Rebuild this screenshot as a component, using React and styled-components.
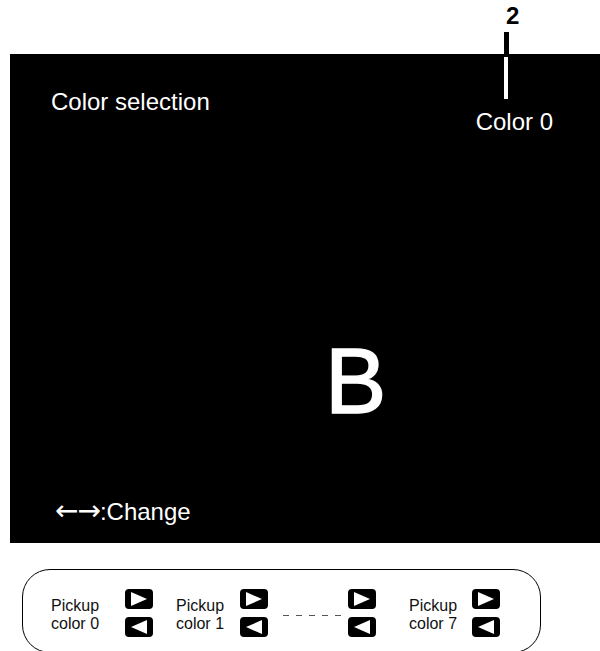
import styled, { createGlobalStyle } from "styled-components";

const GlobalStyle = createGlobalStyle`
  html, body {
    margin: 0;
    padding: 0;
    background: #fff;
    overflow: hidden;
  }
  body {
    font-family: "Liberation Sans", Arial, sans-serif;
  }
`;

export default function App() {
  return (
    <Page>
      <GlobalStyle />
      <Header>
        <Callout>
          <Marker>2</Marker>
          <Stem />
        </Callout>
      </Header>
      <Screen>
        <TopRow>
          <Title>Color selection</Title>
          <ColorInfo>
            <Tick />
            <ColorName>Color 0</ColorName>
          </ColorInfo>
        </TopRow>
        <Letter>B</Letter>
        <Hint>
          <Arrows>←→</Arrows>:Change
        </Hint>
      </Screen>
      <ButtonStrip>
        <Label $gap={26}>
          Pickup
          <br />
          color 0
        </Label>
        <ArrowPair $gap={23} />
        <Label $gap={16}>
          Pickup
          <br />
          color 1
        </Label>
        <ArrowPair $gap={15} />
        <Dashes />
        <ArrowPair $gap={33} />
        <Label $gap={15}>
          Pickup
          <br />
          color 7
        </Label>
        <ArrowPair />
      </ButtonStrip>
    </Page>
  );
}

function ArrowPair({ $gap }) {
  return (
    <Keys $gap={$gap}>
      <Key>
        <svg width="28" height="20" viewBox="0 0 28 20">
          <polygon points="6,3 22,10 6,17" fill="#fff" />
        </svg>
      </Key>
      <Key>
        <svg width="28" height="20" viewBox="0 0 28 20">
          <polygon points="6,10 22,3 22,17" fill="#fff" />
        </svg>
      </Key>
    </Keys>
  );
}

const Page = styled.div`
  width: 600px;
  height: 651px;
  overflow: hidden;
`;

const Header = styled.div`
  height: 54px;
  display: flex;
  padding-left: 504px;
  box-sizing: border-box;
`;

const Callout = styled.div`
  display: flex;
  flex-direction: column;
  align-items: flex-start;
`;

const Marker = styled.div`
  font-size: 24px;
  line-height: 24px;
  font-weight: bold;
  color: #000;
  padding-top: 4px;
  margin-left: 2px;
`;

const Stem = styled.div`
  width: 5px;
  height: 22px;
  margin-top: 4px;
  background: #000;
`;

const Screen = styled.div`
  margin-left: 10px;
  width: 590px;
  height: 489px;
  background: #000;
  color: #fff;
  display: flex;
  flex-direction: column;
  align-items: flex-start;
`;

const TopRow = styled.div`
  align-self: stretch;
  display: flex;
  justify-content: space-between;
  align-items: flex-start;
  padding: 0 47px 0 41px;
  font-size: 24px;
  line-height: 28px;
`;

const Title = styled.div`
  padding-top: 34px;
`;

const ColorInfo = styled.div`
  display: flex;
  flex-direction: column;
  align-items: flex-start;
`;

const Tick = styled.div`
  width: 4px;
  height: 42px;
  margin: 3px 0 0 28px;
  background: #fff;
`;

const ColorName = styled.div`
  margin-top: 9px;
`;

const Letter = styled.div`
  margin: 199px 0 0 315px;
  font-size: 92px;
  line-height: 92px;
  -webkit-text-stroke: 1.5px #fff;
`;

const Hint = styled.div`
  margin: 70px 0 0 45px;
  font-size: 24px;
  line-height: 28px;
  display: flex;
  align-items: baseline;
`;

const Arrows = styled.span`
  font-family: "DejaVu Sans", sans-serif;
  font-size: 28px;
  letter-spacing: -1px;
`;

const ButtonStrip = styled.div`
  margin: 26px 0 0 22px;
  width: 519px;
  height: 84px;
  box-sizing: border-box;
  border: 1px solid #000;
  border-radius: 28px;
  padding: 19px 0 0 28px;
  display: flex;
  align-items: flex-start;
  color: #111;
`;

const Label = styled.div`
  width: 48px;
  margin-top: 8px;
  margin-right: ${(p) => p.$gap || 0}px;
  font-size: 16px;
  line-height: 18px;
  white-space: nowrap;
`;

const Keys = styled.div`
  display: flex;
  flex-direction: column;
  gap: 8px;
  margin-right: ${(p) => p.$gap || 0}px;
`;

const Key = styled.div`
  width: 28px;
  height: 20px;
  border-radius: 4px;
  background: #000;
  display: flex;
`;

const Dashes = styled.div`
  width: 58px;
  height: 1px;
  margin: 26px 7px 0 0;
  background: repeating-linear-gradient(
    to right,
    #555 0 6px,
    transparent 6px 13px
  );
`;
